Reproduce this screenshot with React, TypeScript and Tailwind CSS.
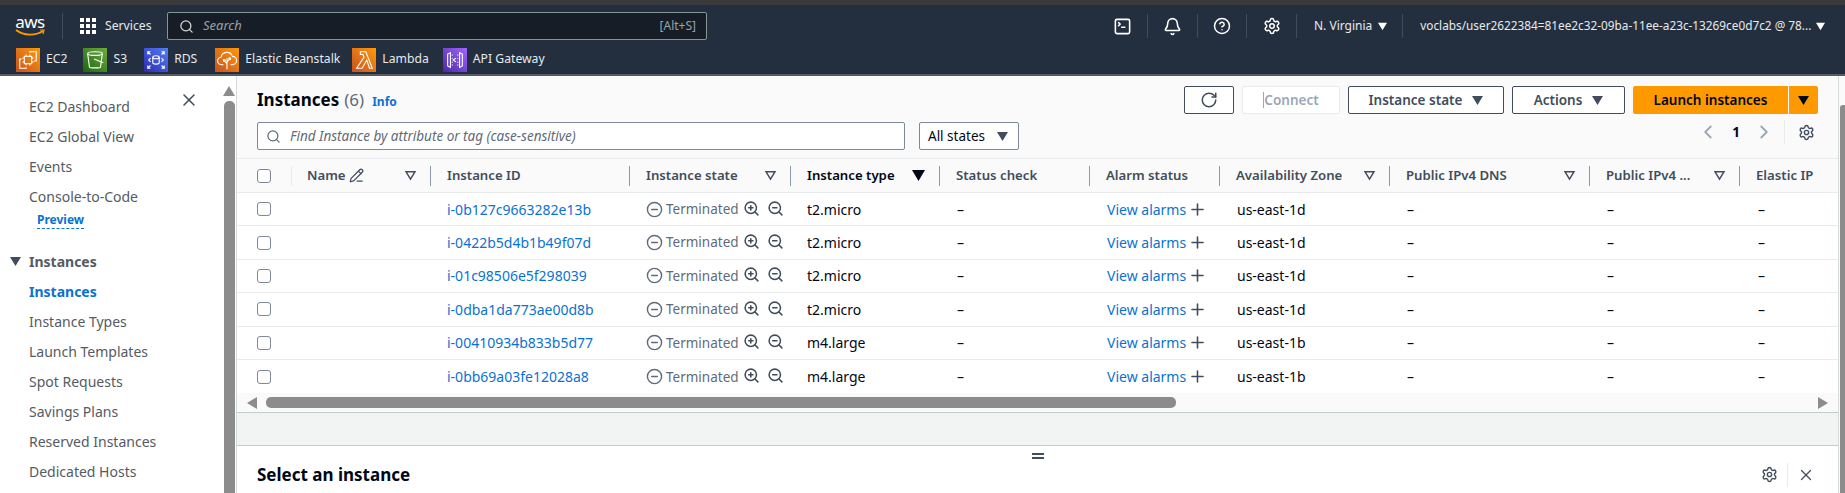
import { Search, RotateCw, X, ZoomIn, ZoomOut, Plus, ChevronLeft, ChevronRight, CircleMinus, PencilLine, Bell, CircleHelp, Settings, SquareTerminal } from "lucide-react";

const Tri = ({ className = "", dir = "down" }: { className?: string; dir?: string }) => {
  const pts: Record<string, string> = { down: "0,1 12,1 6,11", up: "0,11 12,11 6,1", left: "11,0 11,12 1,6", right: "1,0 1,12 11,6" };
  return (
    <svg viewBox="0 0 12 12" className={className} fill="currentColor">
      <polygon points={pts[dir]} />
    </svg>
  );
};

const Outline = () => (
  <svg viewBox="0 0 12 12" className="w-[11px] h-[11px] text-[#414d5c] shrink-0" fill="none" stroke="currentColor" strokeWidth="1.6">
    <polygon points="1.2,2 10.8,2 6,10" />
  </svg>
);

const Fav = ({ name, from, to, children, className = "" }: { name: string; from: string; to: string; children: React.ReactNode; className?: string }) => (
  <div className={`flex items-center gap-[6px] ${className}`}>
    <div className={`w-[24px] h-[24px] bg-gradient-to-tr ${from} ${to} flex items-center justify-center`}>
      <svg viewBox="0 0 24 24" className="w-[22px] h-[22px]" fill="none" stroke="white" strokeWidth="1.2">{children}</svg>
    </div>
    <span className="text-[12.2px] text-[#e8eaec]">{name}</span>
  </div>
);

const navSep = "w-px h-[24px] bg-[#414d5c]";

const rows = [
  ["i-0b127c9663282e13b", "t2.micro", "us-east-1d"],
  ["i-0422b5d4b1b49f07d", "t2.micro", "us-east-1d"],
  ["i-01c98506e5f298039", "t2.micro", "us-east-1d"],
  ["i-0dba1da773ae00d8b", "t2.micro", "us-east-1d"],
  ["i-00410934b833b5d77", "m4.large", "us-east-1b"],
  ["i-0bb69a03fe12028a8", "m4.large", "us-east-1b"],
];

const Check = () => <div className="w-[14px] h-[14px] shrink-0 border border-[#7d8998] rounded-[3px] bg-white" />;

const Head = ({ label, filter = true, active = false, w }: { label: string; filter?: boolean; active?: boolean; w: string }) => (
  <div className={`${w} shrink-0 h-[20px] border-r border-[#8d99a8] flex items-center justify-between pl-[16px] pr-[14px]`}>
    <span className={`text-[13.2px] font-semibold whitespace-nowrap ${active ? "text-[#000716]" : "text-[#414d5c]"}`}>{label}</span>
    {active ? <Tri className="w-[13px] h-[13px] text-[#000716]" /> : filter ? <Outline /> : null}
  </div>
);

const side = ["Instance Types", "Launch Templates", "Spot Requests", "Savings Plans", "Reserved Instances", "Dedicated Hosts"];

export default function App() {
  return (
    <div className="w-[1845px] h-[493px] overflow-hidden flex flex-col bg-white font-['Noto_Sans','Liberation_Sans',sans-serif] text-[14px]">
      <div className="h-[5px] bg-[#3a3a3a] shrink-0" />
      <header className="h-[71px] shrink-0 bg-[#232f3e] border-b-2 border-[#545b64] flex flex-col">
        <div className="h-[39px] flex items-center pl-[15px] pt-[3px]">
          <div className="w-[30px] flex flex-col items-center leading-none relative">
            <span className="text-[17px] text-white leading-[14px] tracking-[-0.5px]">aws</span>
            <svg viewBox="0 0 30 8" className="w-[30px] h-[8px]" fill="none"><path d="M1 1 C 9 7, 20 7, 28 2" stroke="#ff9900" strokeWidth="1.8" /><path d="M25 1 L29 1 L28 5" stroke="#ff9900" strokeWidth="1.2" /></svg>
          </div>
          <div className="w-px h-[26px] bg-[#414d5c] ml-[17px] mr-[17px]" />
          <div className="grid grid-cols-3 gap-[2px] w-[16px] h-[16px] mr-[6px]">
            {Array.from({ length: 9 }).map((_, i) => <div key={i} className="bg-white w-[4px] h-[4px]" />)}
          </div>
          <span className="text-[12.2px] text-[#e8eaec] w-[44px] ml-[3px]">Services</span>
          <div className="ml-[18px] w-[540px] h-[28px] bg-[#161d26] border border-[#879596] rounded-[2px] flex items-center pl-[11px] pr-[10px]">
            <Search className="w-[15px] h-[15px] text-[#d5dbdb] mr-[9px]" strokeWidth={2} />
            <span className="italic text-[13px] text-[#95a5a6] flex-1">Search</span>
            <span className="text-[12px] text-[#95a5a6]">[Alt+S]</span>
          </div>
          <div className="flex items-center ml-[406px]">
            <SquareTerminal className="w-[19px] h-[19px] text-white" />
            <div className={`${navSep} ml-[15px]`} />
            <Bell className="w-[19px] h-[19px] text-white ml-[15px]" />
            <div className={`${navSep} ml-[15px]`} />
            <CircleHelp className="w-[18px] h-[18px] text-white ml-[15px]" />
            <div className={`${navSep} ml-[15px]`} />
            <Settings className="w-[18px] h-[18px] text-white ml-[16px]" />
            <div className={`${navSep} ml-[15px]`} />
            <span className="text-[12px] text-[#e8eaec] ml-[17px]">N. Virginia</span>
            <Tri className="w-[9px] h-[9px] text-white ml-[6px]" />
            <div className={`${navSep} ml-[15px]`} />
            <span className="text-[11.8px] text-[#e8eaec] ml-[17px] whitespace-nowrap">voclabs/user2622384=81ee2c32-09ba-11ee-a23c-13269ce0d7c2 @ 78...</span>
            <Tri className="w-[9px] h-[9px] text-white ml-[5px]" />
          </div>
        </div>
        <div className="flex-1 flex items-center pl-[16px] gap-[16px] pt-[1px]">
          <Fav name="EC2" from="from-[#c8511b]" to="to-[#ff9900]">
            <rect x="8" y="8" width="8" height="8" /><path d="M10 6v2M14 6v2M10 16v2M14 16v2M6 10h2M6 14h2M16 10h2M16 14h2" /><path d="M14 4V3h7v10h-2M10 20v1H3V11h2" />
          </Fav>
          <Fav name="S3" from="from-[#1b660f]" to="to-[#6cae3e]">
            <path d="M4 5l2 15c0 1 12 1 12 0l2-15" /><ellipse cx="12" cy="5" rx="8" ry="2" /><path d="M11 11l10 4" />
          </Fav>
          <Fav name="RDS" from="from-[#2e27ad]" to="to-[#527fff]" className="ml-[1px]">
            <ellipse cx="12" cy="9" rx="3.5" ry="1.6" /><path d="M8.500 9v6c0 2 7 2 7 0V9" /><path d="M3 6V3h3M21 6V3h-3M3 18v3h3M21 18v3h-3M3 3l3 3M21 3l-3 3M3 21l3-3M21 21l-3-3" /><path d="M6 10l-2 2 2 2M18 10l2 2-2 2" />
          </Fav>
          <Fav name="Elastic Beanstalk" from="from-[#c8511b]" to="to-[#ff9900]" className="ml-[2px]">
            <path d="M8 17H6a4 4 0 0 1-.5-8 6.5 6.5 0 0 1 12.5-1 4.5 4.5 0 0 1 0 9h-2" /><path d="M12 22V10M12 16l-3-3M12 14l3-3" /><circle cx="9" cy="12.5" r="1" /><circle cx="15" cy="10.5" r="1" />
          </Fav>
          <Fav name="Lambda" from="from-[#c8511b]" to="to-[#ff9900]" className="ml-[-4px]">
            <path d="M5 21h5l5-9 3 9h3L14 3H8v3h3l1 3-8 12z" />
          </Fav>
          <Fav name="API Gateway" from="from-[#4d27a8]" to="to-[#a166ff]" className="ml-[-2px]">
            <path d="M7 4L4 5.500v13L7 20zM17 4l3 1.500v13L17 20z" /><path d="M13 10l-3 2 3 2" /><path d="M9 6v1M9 10v1M9 14v1M9 17v1M15 6v1M15 10v1M15 14v1M15 17v1" />
          </Fav>
        </div>
      </header>

      <div className="flex-1 flex min-h-0">
        <aside className="w-[237px] shrink-0 flex min-h-0 border-r border-[#d5dbdb]">
          <nav className="w-[221px] shrink-0 pt-[15px] text-[#545b64] relative">
            <X className="absolute left-[179px] top-[14px] w-[20px] h-[20px] text-[#414d5c]" strokeWidth={1.8} />
            <div className="pl-[29px] flex flex-col">
              {["EC2 Dashboard", "EC2 Global View", "Events", "Console-to-Code"].map((s) => (
                <div key={s} className="h-[30px] flex items-center">{s}</div>
              ))}
              <span className="ml-[8px] mt-[1px] self-start text-[12px] font-bold text-[#0972d3] border-b border-dashed border-[#0972d3] leading-[15px] h-[17px]">Preview</span>
            </div>
            <div className="flex items-center mt-[17px] h-[30px] pl-[10px]">
              <Tri className="w-[11px] h-[11px] text-[#414d5c] mr-[8px]" />
              <span className="font-bold">Instances</span>
            </div>
            <div className="pl-[29px] flex flex-col">
              <div className="h-[30px] flex items-center font-bold text-[#0972d3]">Instances</div>
              {side.map((s) => <div key={s} className="h-[30px] flex items-center">{s}</div>)}
            </div>
          </nav>
          <div className="w-[16px] shrink-0 flex flex-col items-center">
            <Tri dir="up" className="w-[12px] h-[12px] text-[#8c8c8c] mt-[9px]" />
            <div className="w-[11px] flex-1 mt-[4px] bg-[#8c8c8c] rounded-t-[5px]" />
          </div>
        </aside>

        <main className="flex-1 min-w-0 flex flex-col bg-[#fafafa] pr-[6px] relative">
          <div className="flex-1 flex flex-col border-r border-[#d5dbdb] min-h-0">
            <div className="h-[80px] shrink-0 relative">
              <div className="flex items-start pl-[20px] pr-[20px] pt-[10px]">
                <h1 className="flex gap-[5px] text-[17px] font-bold text-[#000716] leading-[28px] whitespace-nowrap"><span>Instances</span><span className="font-normal text-[#5f6b7a]">(6)</span></h1>
                <span className="text-[12px] font-bold text-[#0972d3] ml-[8px] mt-[7px]">Info</span>
                <div className="ml-auto flex items-center gap-[8px]">
                  <div className="w-[50px] h-[28px] border border-[#414d5c] bg-white rounded-[2px] flex items-center justify-center"><RotateCw className="w-[18px] h-[18px] text-[#414d5c]" /></div>
                  <div className="w-[98px] h-[28px] border border-[#e9ebed] bg-white rounded-[2px] flex items-center justify-center text-[13.5px] font-semibold text-[#9ba7b6]"><span className="w-px h-[16px] bg-[#9ba7b6]" />Connect</div>
                  <div className="w-[156px] h-[28px] border border-[#414d5c] bg-white rounded-[2px] flex items-center justify-center gap-[10px] text-[13.5px] font-semibold text-[#414d5c]">Instance state<Tri className="w-[11px] h-[11px]" /></div>
                  <div className="w-[113px] h-[28px] border border-[#414d5c] bg-white rounded-[2px] flex items-center justify-center gap-[10px] text-[13.5px] font-semibold text-[#414d5c]">Actions<Tri className="w-[11px] h-[11px]" /></div>
                  <div className="flex gap-px">
                    <div className="w-[155px] h-[28px] bg-[#ff9900] rounded-l-[2px] flex items-center justify-center text-[13.5px] font-semibold text-[#000716]">Launch instances</div>
                    <div className="w-[29px] h-[28px] bg-[#ff9900] rounded-r-[2px] flex items-center justify-center"><Tri className="w-[11px] h-[11px] text-[#000716]" /></div>
                  </div>
                </div>
              </div>
              <div className="flex items-center pl-[20px] pr-[20px] mt-[8px]">
                <div className="w-[648px] h-[28px] border border-[#7d8998] rounded-[2px] bg-white flex items-center pl-[8px]">
                  <Search className="w-[15px] h-[15px] text-[#5f6b7a] mr-[9px]" />
                  <span className="italic text-[13.5px] text-[#5f6b7a]">Find Instance by attribute or tag (case-sensitive)</span>
                </div>
                <div className="ml-[14px] w-[100px] h-[28px] border border-[#7d8998] rounded-[2px] bg-white flex items-center justify-between pl-[8px] pr-[10px] text-[13.5px] text-[#000716]">All states<Tri className="w-[11px] h-[11px] text-[#414d5c]" /></div>
                <div className="ml-auto flex items-center mt-[-8px]">
                  <ChevronLeft className="w-[22px] h-[22px] text-[#9ba7b6]" />
                  <span className="text-[13.5px] font-bold text-[#000716] mx-[13px]">1</span>
                  <ChevronRight className="w-[22px] h-[22px] text-[#9ba7b6]" />
                  <div className="w-px h-[24px] bg-[#e9ebed] ml-[9px]" />
                  <Settings className="w-[17px] h-[17px] text-[#414d5c] ml-[13px] mr-[3px]" />
                </div>
              </div>
            </div>

            <div className="shrink-0 border-t border-[#e9ebed] overflow-hidden mt-[2px]">
              <div className="h-[34px] flex items-center border-b border-[#e9ebed] pl-[20px] whitespace-nowrap">
                <Check />
                <div className="w-px h-[20px] bg-[#e9ebed] ml-[20px] shrink-0" />
                <div className="w-[139px] shrink-0 h-[20px] border-r border-[#8d99a8] flex items-center justify-between pl-[15px] pr-[14px]">
                  <span className="flex items-center text-[13.2px] font-semibold text-[#414d5c]">Name<PencilLine className="w-[15px] h-[15px] ml-[3px]" /></span>
                  <Outline />
                </div>
                <Head label="Instance ID" filter={false} w="w-[199px]" />
                <Head label="Instance state" w="w-[161px]" />
                <Head label="Instance type" active w="w-[149px]" />
                <Head label="Status check" filter={false} w="w-[150px]" />
                <Head label="Alarm status" filter={false} w="w-[130px]" />
                <Head label="Availability Zone" w="w-[170px]" />
                <Head label="Public IPv4 DNS" w="w-[200px]" />
                <Head label="Public IPv4 ..." w="w-[150px]" />
                <div className="pl-[16px] text-[13.2px] font-semibold text-[#414d5c]">Elastic IP</div>
              </div>
              {rows.map((r) => (
                <div key={r[0]} className="h-[33.4px] flex items-center border-b border-[#e9ebed] last:border-b-0 bg-white pl-[20px] whitespace-nowrap text-[14px] text-[#000716]">
                  <div className="w-[190px] shrink-0"><Check /></div>
                  <div className="w-[199px] shrink-0 text-[14px] text-[#0972d3]">{r[0]}</div>
                  <div className="w-[161px] shrink-0 flex items-center text-[13.5px] text-[#5f6b7a]">
                    <CircleMinus className="w-[17px] h-[17px] mr-[3px]" />
                    Terminated
                    <ZoomIn className="w-[17px] h-[17px] text-[#414d5c] ml-[4px] mb-[2px]" strokeWidth={2.2} />
                    <ZoomOut className="w-[17px] h-[17px] text-[#414d5c] ml-[7px] mb-[2px]" strokeWidth={2.2} />
                  </div>
                  <div className="w-[149px] shrink-0">{r[1]}</div>
                  <div className="w-[150px] shrink-0 pl-[1px]">–</div>
                  <div className="w-[130px] shrink-0 pl-[1px] flex items-center text-[#0972d3]">View alarms<Plus className="w-[19px] h-[19px] text-[#414d5c] ml-[2px]" /></div>
                  <div className="w-[170px] shrink-0 pl-[1px]">{r[2]}</div>
                  <div className="w-[200px] shrink-0 pl-[1px]">–</div>
                  <div className="w-[150px] shrink-0 pl-[1px]">–</div>
                  <div className="pl-[2px]">–</div>
                </div>
              ))}
            </div>
            <div className="h-[19px] shrink-0 flex items-center pl-[9px] pr-[9px] bg-[#fafafa]">
              <Tri dir="left" className="w-[12px] h-[12px] text-[#8c8c8c]" />
              <div className="ml-[8px] w-[910px] h-[11px] bg-[#8c8c8c] rounded-[5px]" />
              <Tri dir="right" className="w-[12px] h-[12px] text-[#8c8c8c] ml-auto" />
            </div>
            <div className="h-[34px] shrink-0 bg-[#f2f3f3] border-y border-[#c4cbcb]" />
            <div className="flex-1 bg-white flex items-center pl-[20px] pr-[23px] relative">
              <div className="absolute left-[795px] top-[7px] w-[12px] h-[6px] border-y-2 border-[#414d5c]" />
              <h2 className="text-[17px] font-bold text-[#000716] mt-[10px]">Select an instance</h2>
              <div className="ml-auto flex items-center mt-[10px]">
                <Settings className="w-[17px] h-[17px] text-[#414d5c]" />
                <div className="w-px h-[24px] bg-[#e9ebed] mx-[9px]" />
                <X className="w-[18px] h-[18px] text-[#414d5c]" strokeWidth={1.7} />
              </div>
            </div>
          </div>
          <div className="absolute right-0 top-[29px] bottom-0 w-[5px] bg-[#8c8c8c] rounded-tl-[3px]" />
        </main>
      </div>
    </div>
  );
}
